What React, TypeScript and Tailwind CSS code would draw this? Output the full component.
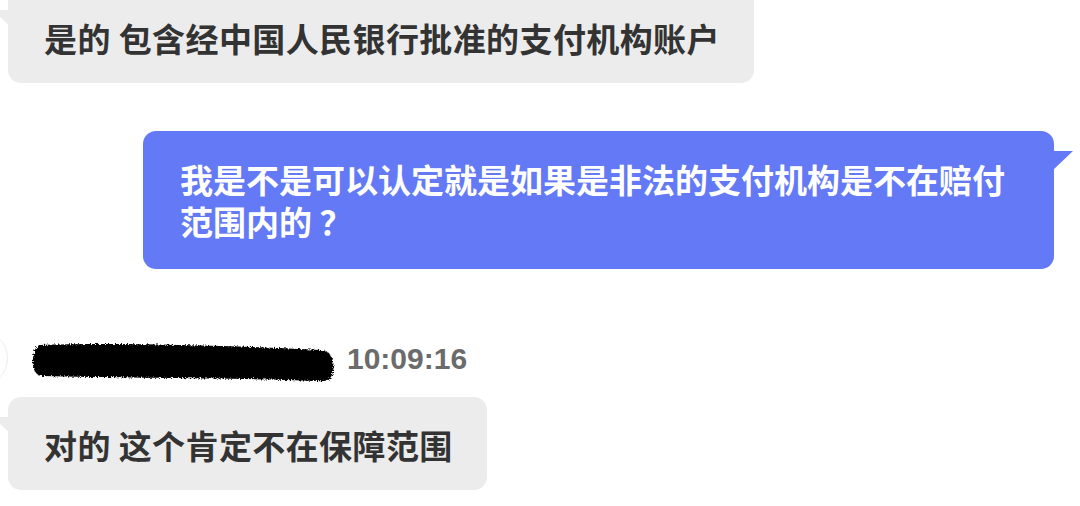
const cjk = { fontFamily: '"Noto Sans CJK SC", "Noto Sans", sans-serif' };

function GrayTail() {
  return (
    <svg className="absolute left-[-8px] top-[20px]" width="9" height="16" viewBox="0 0 9 16">
      <polygon points="0,0 9,0 9,15 0,7" fill="#ececec" />
    </svg>
  );
}

function GrayBubble({ text, className }: { text: string; className?: string }) {
  return (
    <div className={`relative self-start bg-[#ececec] rounded-[13px] pl-[36px] pr-[34px] pt-[27px] pb-[24px] ${className ?? ''}`}>
      <GrayTail />
      <p className="text-[33px] leading-[42px] font-bold text-[#333333] tracking-[0.4px] whitespace-nowrap" style={cjk}>
        {text}
      </p>
    </div>
  );
}

export default function App() {
  return (
    <div className="w-[1080px] h-[506px] overflow-hidden bg-white flex flex-col">
      {/* 对方消息 */}
      <GrayBubble text="是的 包含经中国人民银行批准的支付机构账户" className="ml-[8px] -mt-[10px]" />

      {/* 我的消息 */}
      <div className="relative self-start ml-[143px] mt-[48px] w-[911px] h-[138px] bg-[#6479f5] rounded-[13px] pl-[37px] pr-[20px] pt-[27px]">
        <svg className="absolute right-[-19px] top-[20px]" width="20" height="19" viewBox="0 0 20 19">
          <polygon points="0,0 20,0 0,19" fill="#6479f5" />
        </svg>
        <p className="text-[33px] leading-[42px] font-bold text-white tracking-[0px] whitespace-nowrap" style={cjk}>
          我是不是可以认定就是如果是非法的支付机构是不在赔付
          <br />
          范围内的 ？
        </p>
      </div>

      {/* 昵称 + 时间 */}
      <div className="flex items-start mt-[71px] h-[46px]">
        <div className="w-[56px] h-[56px] -ml-[48px] -mt-[10px] rounded-full border border-[#ededed] shrink-0" />
        <svg className="ml-[22px] shrink-0" width="306" height="46" viewBox="0 0 306 46">
          <defs>
            <filter id="rough" x="-5%" y="-20%" width="110%" height="140%">
              <feTurbulence type="fractalNoise" baseFrequency="0.7" numOctaves="2" result="n" />
              <feDisplacementMap in="SourceGraphic" in2="n" scale="5" />
            </filter>
          </defs>
          <path
            d="M10 5 C80 2 220 6 292 10 C302 11 305 22 303 32 C301 40 296 42 288 41 C210 38 90 38 12 36 C4 35 2 26 3 18 C4 10 6 6 10 5Z"
            fill="#000"
            filter="url(#rough)"
          />
        </svg>
        <span
          className="ml-[11px] mt-[4px] text-[30px] leading-[30px] font-bold text-[#6b6b6b]"
          style={{ fontFamily: '"Liberation Sans", Arial, sans-serif' }}
        >
          10:09:16
        </span>
      </div>

      <GrayBubble text="对的 这个肯定不在保障范围" className="ml-[8px] mt-[11px]" />
    </div>
  );
}
